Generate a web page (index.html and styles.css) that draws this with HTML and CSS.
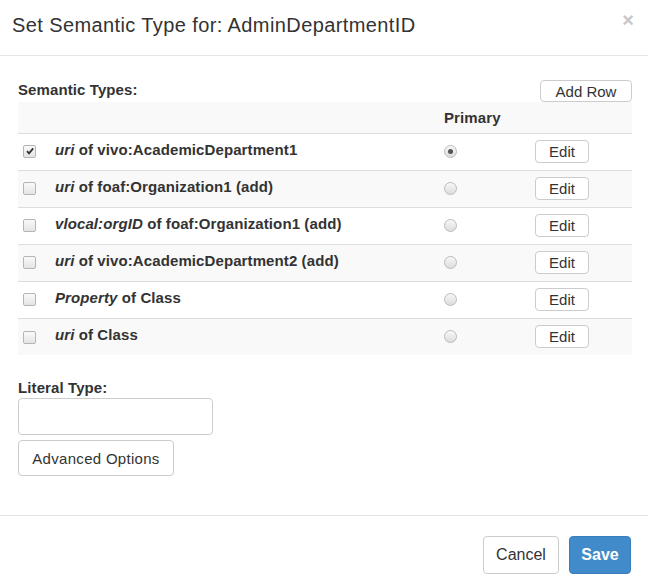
FILE: index.html
```html
<!DOCTYPE html>
<html>
<head>
<meta charset="utf-8">
<link rel="stylesheet" href="styles.css">
</head>
<body>
<div class="modal">
  <div class="modal-header">
    <h4 class="title">Set Semantic Type for: AdminDepartmentID</h4>
    <span class="close">&#215;</span>
  </div>
  <div class="modal-body">
    <div class="st-head">
      <span class="label">Semantic Types:</span>
      <button class="btn btn-add">Add Row</button>
    </div>
    <table class="types">
      <tr class="thead"><td class="c-check"></td><td class="c-label"></td><td class="c-primary">Primary</td><td class="c-edit"></td></tr>
      <tr><td class="c-check"><span class="cb checked"><svg viewBox="0 0 12 12" width="12" height="12"><path d="M3 6.2 L5 8.4 L9.2 3.4" fill="none" stroke="#333" stroke-width="1.8"/></svg></span></td><td class="c-label"><i>uri</i> of vivo:AcademicDepartment1</td><td class="c-primary"><span class="radio on"></span></td><td class="c-edit"><button class="btn btn-edit">Edit</button></td></tr>
      <tr><td class="c-check"><span class="cb"></span></td><td class="c-label"><i>uri</i> of foaf:Organization1 (add)</td><td class="c-primary"><span class="radio"></span></td><td class="c-edit"><button class="btn btn-edit">Edit</button></td></tr>
      <tr><td class="c-check"><span class="cb"></span></td><td class="c-label"><i>vlocal:orgID</i> of foaf:Organization1 (add)</td><td class="c-primary"><span class="radio"></span></td><td class="c-edit"><button class="btn btn-edit">Edit</button></td></tr>
      <tr><td class="c-check"><span class="cb"></span></td><td class="c-label"><i>uri</i> of vivo:AcademicDepartment2 (add)</td><td class="c-primary"><span class="radio"></span></td><td class="c-edit"><button class="btn btn-edit">Edit</button></td></tr>
      <tr><td class="c-check"><span class="cb"></span></td><td class="c-label"><i>Property</i> of Class</td><td class="c-primary"><span class="radio"></span></td><td class="c-edit"><button class="btn btn-edit">Edit</button></td></tr>
      <tr><td class="c-check"><span class="cb"></span></td><td class="c-label"><i>uri</i> of Class</td><td class="c-primary"><span class="radio"></span></td><td class="c-edit"><button class="btn btn-edit">Edit</button></td></tr>
    </table>
    <div class="literal">
      <span class="label">Literal Type:</span>
      <input class="input" type="text">
      <button class="btn btn-adv">Advanced Options</button>
    </div>
  </div>
  <div class="modal-footer">
    <button class="btn btn-cancel">Cancel</button>
    <button class="btn btn-save">Save</button>
  </div>
</div>
</body>
</html>
```
FILE: styles.css
```css
html, body {
  margin: 0;
  padding: 0;
  background: #fff;
}
body {
  font-family: "Liberation Sans", Arial, sans-serif;
  color: #333;
  font-size: 14px;
}
.modal {
  width: 648px;
}
.modal-header {
  height: 56px;
  border-bottom: 1px solid #e5e5e5;
  box-sizing: border-box;
  display: flex;
  align-items: center;
  justify-content: space-between;
  padding: 0 14px 4px 12px;
}
.title {
  margin: 0;
  font-size: 20px;
  font-weight: normal;
  color: #333;
  letter-spacing: 0.4px;
}
.close {
  font-size: 20px;
  font-weight: bold;
  color: #c8c8c8;
  line-height: 1;
  margin-top: -12px;
}
.modal-body {
  padding: 24px 16px 0 18px;
  height: 460px;
  box-sizing: border-box;
  border-bottom: 1px solid #e5e5e5;
}
.label {
  font-weight: bold;
  font-size: 15px;
  color: #333;
  letter-spacing: 0.1px;
}
.st-head {
  display: flex;
  justify-content: space-between;
  align-items: flex-end;
  height: 22px;
}
.st-head .label {
  margin-bottom: 4px;
}
.btn {
  font-family: "Liberation Sans", Arial, sans-serif;
  background: #fff;
  border: 1px solid #ccc;
  border-radius: 4px;
  color: #333;
  padding: 0;
  cursor: pointer;
}
.btn-add {
  width: 92px;
  height: 22px;
  font-size: 15px;
}
.types {
  width: 100%;
  border-collapse: collapse;
}
.types tr {
  height: 37px;
  border-top: 1px solid #ddd;
}
.types tr:nth-child(odd) {
  background: #f9f9f9;
}
.types tr.thead {
  height: 31px;
  border-top: none;
}
.types td {
  padding: 0 0 4px 0;
  vertical-align: middle;
  font-weight: bold;
  font-size: 15px;
  letter-spacing: 0.1px;
}
.types tr.thead td {
  padding-bottom: 0;
}
.types td.c-check {
  width: 32px;
  padding-left: 5px;
}
.c-label {
  width: 389px;
}
.c-primary {
  width: 91px;
}
.cb {
  display: inline-block;
  width: 11px;
  height: 11px;
  border: 1px solid #b5b5b5;
  border-radius: 2px;
  background: linear-gradient(#fafafa, #e4e4e4);
  vertical-align: middle;
  margin-top: 2px;
  position: relative;
}
.cb svg {
  position: absolute;
  left: 0;
  top: -1px;
}
.radio {
  display: inline-block;
  width: 11px;
  height: 11px;
  border: 1px solid #bcbcbc;
  border-radius: 50%;
  background: linear-gradient(#f8f8f8, #dcdcdc);
  position: relative;
  vertical-align: middle;
  margin-top: 0;
}
.radio.on::after {
  content: "";
  position: absolute;
  left: 3px;
  top: 3px;
  width: 5px;
  height: 5px;
  border-radius: 50%;
  background: #555;
}
.btn-edit {
  width: 54px;
  height: 23px;
  font-size: 15px;
  margin-top: 3px;
}
.literal {
  display: flex;
  flex-direction: column;
  align-items: flex-start;
  margin-top: 24px;
}
.input {
  width: 195px;
  height: 37px;
  box-sizing: border-box;
  border: 1px solid #ccc;
  border-radius: 4px;
  margin-top: 2px;
}
.btn-adv {
  width: 156px;
  height: 36px;
  font-size: 15px;
  letter-spacing: 0.3px;
  margin-top: 5px;
}
.modal-footer {
  display: flex;
  justify-content: flex-end;
  gap: 10px;
  padding: 20px 17px 0 0;
}
.btn-cancel {
  width: 76px;
  height: 38px;
  font-size: 16px;
}
.btn-save {
  width: 62px;
  height: 38px;
  font-size: 16px;
  font-weight: bold;
  background: #428bca;
  border-color: #3a7dbb;
  color: #fff;
}
```
